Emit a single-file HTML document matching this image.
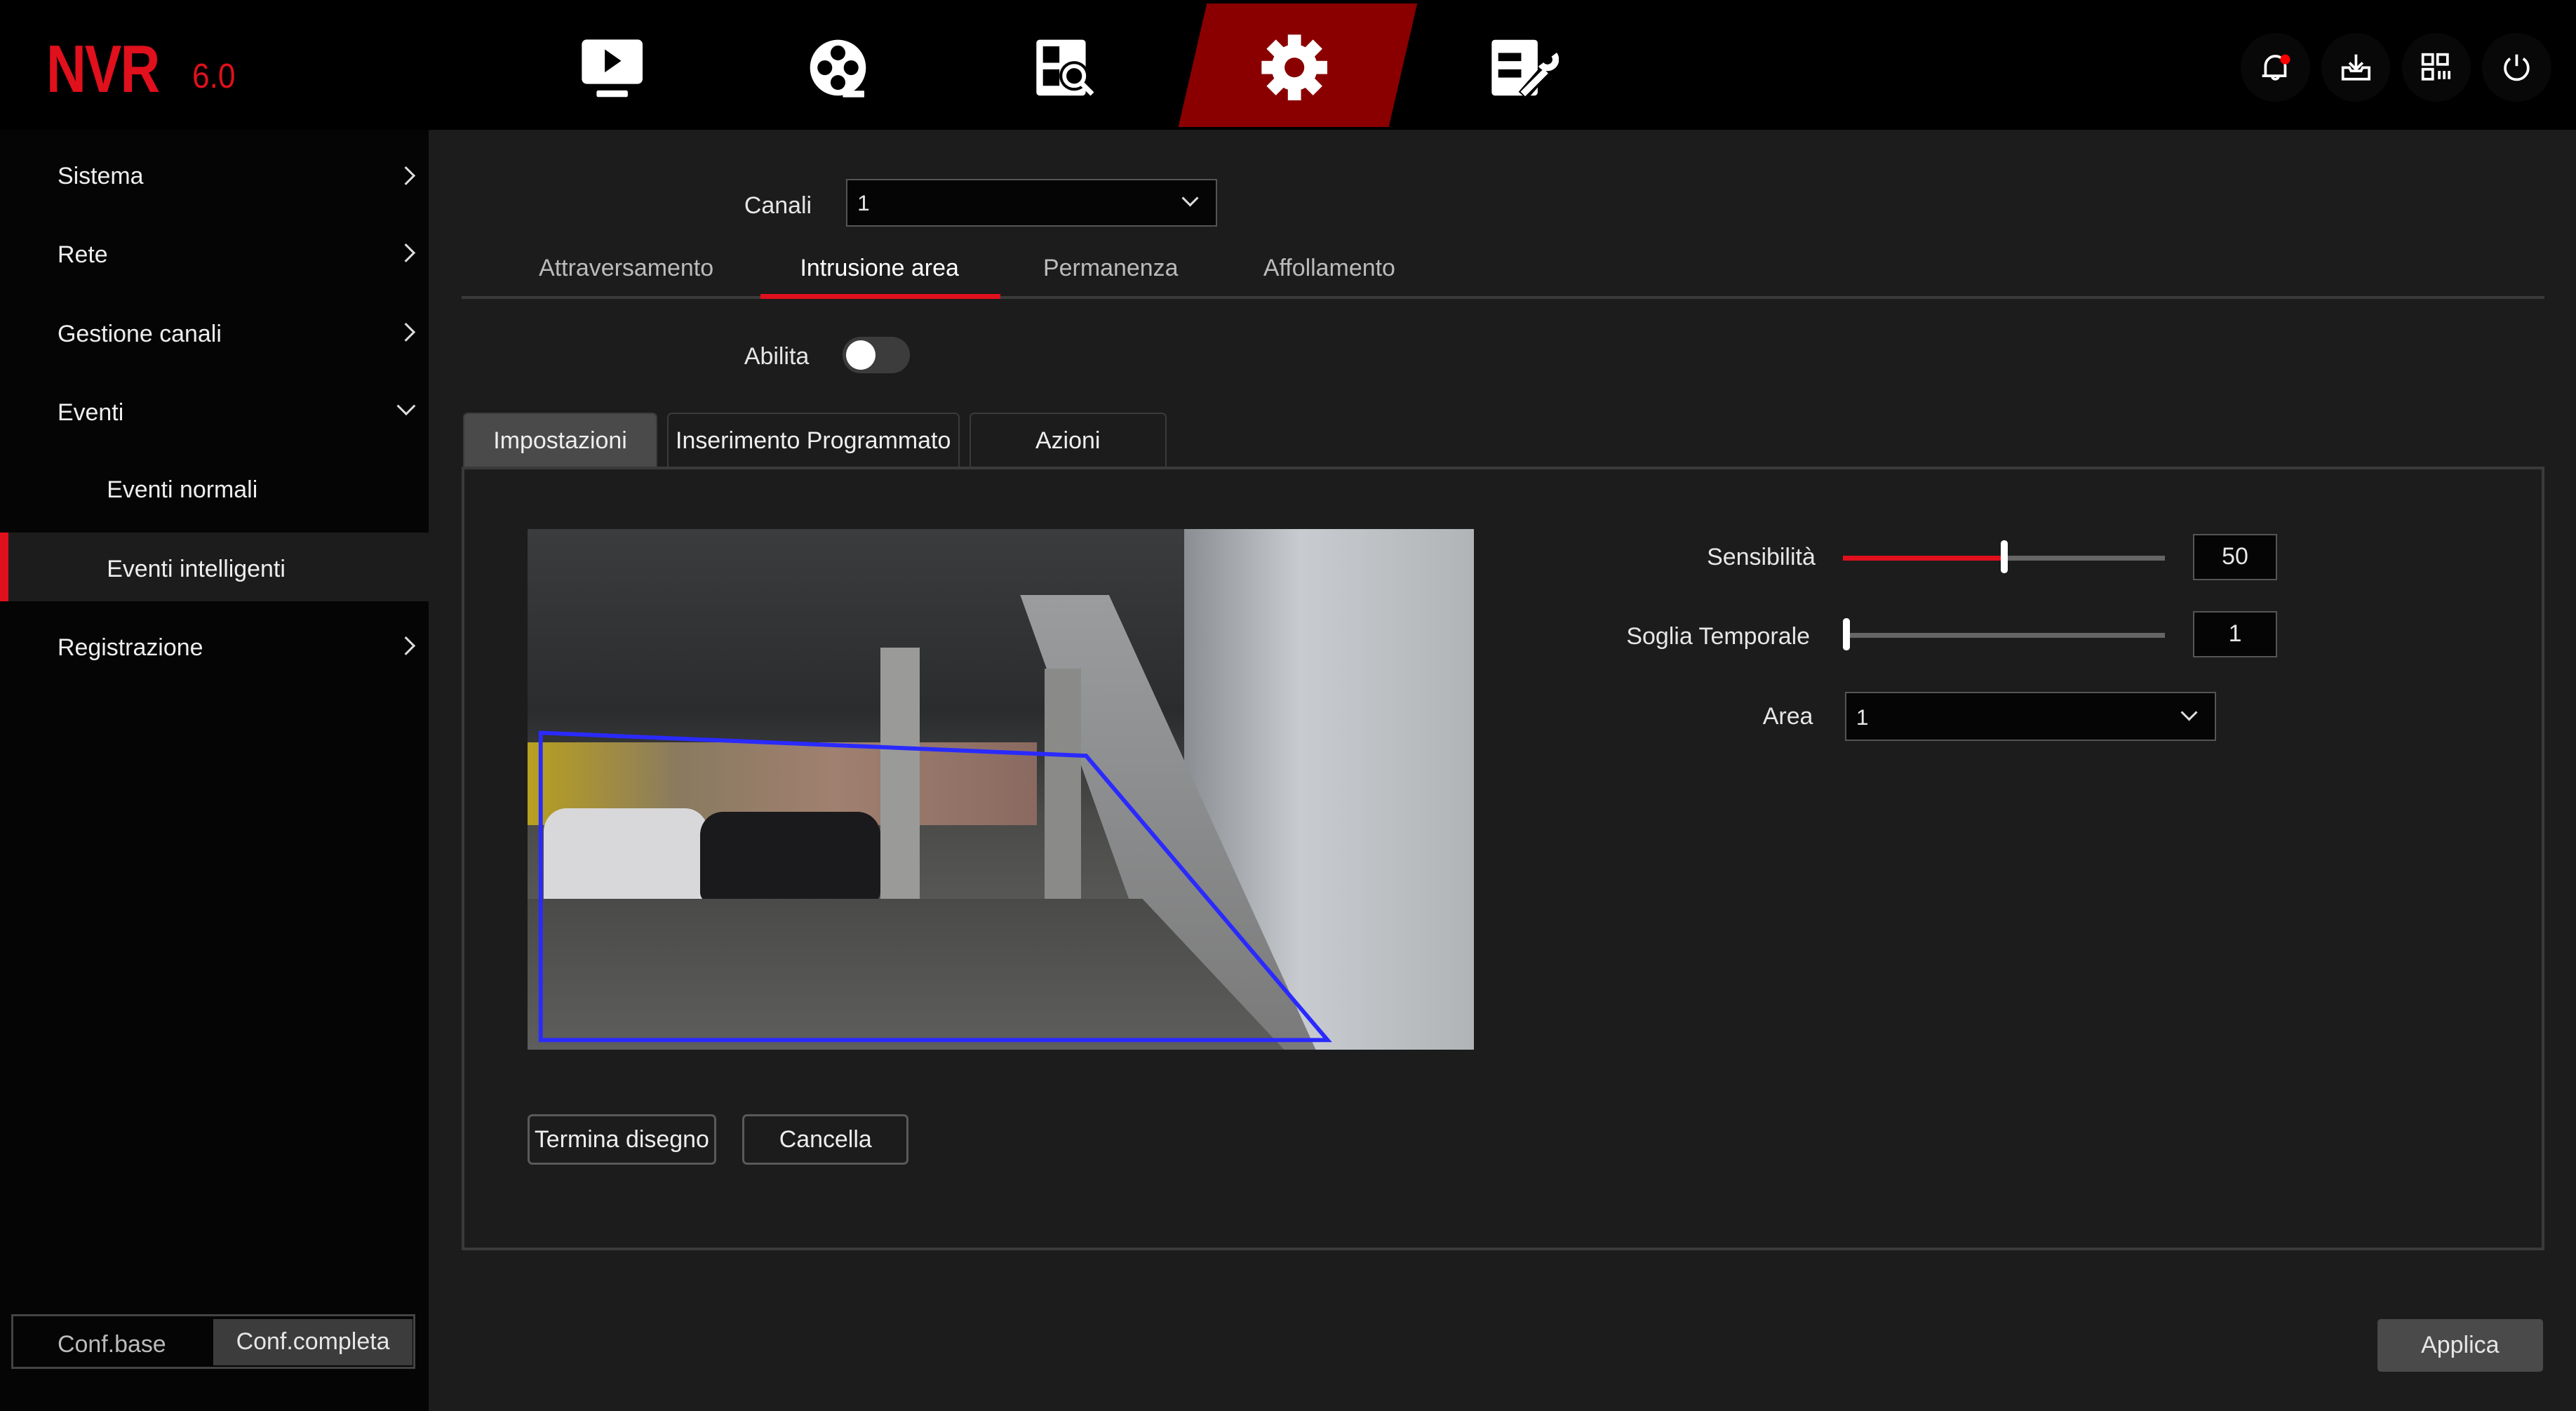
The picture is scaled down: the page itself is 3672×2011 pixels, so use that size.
<!DOCTYPE html>
<html><head><meta charset="utf-8"><style>
html,body{margin:0;padding:0;background:#1c1c1c;width:3672px;height:2011px;overflow:hidden}
#w{zoom:2.3418;width:1568px;height:859px;position:relative;font-family:"Liberation Sans",sans-serif;color:#e6e6e6;font-size:14.5px}
.a{position:absolute}
#hdr{left:0;top:0;width:1568px;height:79px;background:#000}
#side{left:0;top:79px;width:261px;height:780px;background:#050505}
.mi{position:absolute;left:35px;font-size:14.5px;color:#eee}
.chev{position:absolute;left:243px;width:7px;height:7px;border-right:1.6px solid #ddd;border-top:1.6px solid #ddd;transform:rotate(45deg)}
.tab{position:absolute;top:251px;height:33px;border:1px solid #3a3a3a;border-bottom:none;border-radius:3px 3px 0 0;text-align:center;line-height:33px;color:#eee;box-sizing:border-box}
.btn{position:absolute;border:1.5px solid #5a5a5a;border-radius:3px;text-align:center;box-sizing:border-box;color:#eee;background:#1c1c1c}
.ic{position:absolute;top:20px;width:42px;height:42px;border-radius:50%;background:#080808}
</style></head><body><div id="w">
<div class="a" id="hdr"></div>
<div class="a" style="left:28px;top:19px;color:#e0101c;font-size:41px;font-weight:bold;letter-spacing:-1px;transform:scaleX(0.82);transform-origin:left">NVR</div>
<div class="a" style="left:117px;top:34px;color:#e0101c;font-size:21px;transform:scaleX(0.9);transform-origin:left">6.0</div>
<div class="a" style="left:726px;top:2px;width:128px;height:75px;background:#8a0000;transform:skewX(-13deg)"></div>
<svg class="a" style="left:353px;top:23px" width="40" height="38" viewBox="0 0 40 38"><rect x="1" y="1" width="37" height="27" rx="3" fill="#fff"/><path d="M15 7 L25 14 L15 21Z" fill="#000"/><rect x="10" y="32" width="19" height="4" rx="1" fill="#fff"/></svg>
<svg class="a" style="left:491px;top:22px" width="40" height="40" viewBox="0 0 40 40"><circle cx="19" cy="19" r="17" fill="#fff"/><circle cx="19" cy="10" r="4.5" fill="#000"/><circle cx="11" cy="19" r="4.5" fill="#000"/><circle cx="27" cy="19" r="4.5" fill="#000"/><circle cx="19" cy="28" r="4.5" fill="#000"/><rect x="22" y="33" width="13" height="4" fill="#fff"/></svg>
<svg class="a" style="left:630px;top:22px" width="40" height="40" viewBox="0 0 40 40"><rect x="1" y="2" width="30" height="34" rx="2" fill="#fff"/><rect x="5" y="6" width="10" height="10" fill="#000"/><rect x="5" y="20" width="10" height="10" fill="#000"/><circle cx="24" cy="24" r="9" fill="#000"/><circle cx="24" cy="24" r="6" fill="none" stroke="#fff" stroke-width="2.5"/><path d="M28 28 L35 35" stroke="#fff" stroke-width="3"/></svg>
<svg class="a" style="left:767px;top:20px" width="42" height="42" viewBox="0 0 42 42"><g fill="#fff" transform="translate(21 21)"><circle r="14"/><g id="t"><rect x="-4" y="-20" width="8" height="8"/></g><use href="#t" transform="rotate(45)"/><use href="#t" transform="rotate(90)"/><use href="#t" transform="rotate(135)"/><use href="#t" transform="rotate(180)"/><use href="#t" transform="rotate(225)"/><use href="#t" transform="rotate(270)"/><use href="#t" transform="rotate(315)"/><circle r="6" fill="#8a0000"/></g></svg>
<svg class="a" style="left:907px;top:22px" width="42" height="40" viewBox="0 0 42 40"><rect x="1" y="2" width="28" height="34" rx="2" fill="#fff"/><rect x="5" y="10" width="14" height="5" fill="#000"/><rect x="5" y="20" width="14" height="5" fill="#000"/><path d="M20 36 L34 20 M32 16 l6 0 l2 -5" stroke="#000" stroke-width="7" fill="none"/><path d="M20 35 L34 21 M31 17 a5 5 0 0 0 8 -6" stroke="#fff" stroke-width="4" fill="none"/></svg>
<div class="ic" style="left:1364px"></div><div class="ic" style="left:1413px"></div><div class="ic" style="left:1462px"></div><div class="ic" style="left:1511px"></div>
<svg class="a" style="left:1375px;top:31px" width="20" height="20" viewBox="0 0 20 20"><path d="M4 15 V9 a6 6 0 0 1 12 0 V15 H2 M8 15 a2 2 0 0 0 4 0" stroke="#fff" stroke-width="1.6" fill="none"/><circle cx="16" cy="5" r="3" fill="#f00"/></svg>
<svg class="a" style="left:1424px;top:31px" width="20" height="20" viewBox="0 0 20 20"><path d="M10 2 V11 M6 7 L10 11 L14 7 M2 10 V17 H18 V10 H14 L13 12 H7 L6 10 Z" stroke="#fff" stroke-width="1.6" fill="none"/></svg>
<svg class="a" style="left:1473px;top:31px" width="20" height="20" viewBox="0 0 20 20"><g stroke="#fff" stroke-width="1.6" fill="none"><rect x="2" y="2" width="6" height="6"/><rect x="11" y="2" width="6" height="6"/><rect x="2" y="11" width="6" height="6"/><path d="M12 12 V17 M15 12 V17 M18 12 V17"/></g></svg>
<svg class="a" style="left:1522px;top:31px" width="20" height="20" viewBox="0 0 20 20"><path d="M6 4.5 a7 7 0 1 0 8 0 M10 2 V9" stroke="#fff" stroke-width="1.6" fill="none"/></svg>

<div class="a" id="side"></div>
<div class="mi" style="top:99px">Sistema</div><div class="chev" style="top:103px"></div>
<div class="mi" style="top:147px">Rete</div><div class="chev" style="top:150px"></div>
<div class="mi" style="top:195px">Gestione canali</div><div class="chev" style="top:198px"></div>
<div class="mi" style="top:243px">Eventi</div><div class="chev" style="top:243px;transform:rotate(135deg)"></div>
<div class="mi" style="left:65px;top:290px">Eventi normali</div>
<div class="a" style="left:0;top:324px;width:261px;height:42px;background:#1c1c1c"></div>
<div class="a" style="left:0;top:324px;width:5px;height:42px;background:#e0101c"></div>
<div class="mi" style="left:65px;top:338px">Eventi intelligenti</div>
<div class="mi" style="top:386px">Registrazione</div><div class="chev" style="top:389px"></div>
<div class="a" style="left:7px;top:800px;width:246px;height:33px;border:1.5px solid #444;box-sizing:border-box"></div>
<div class="a" style="left:35px;top:810px;color:#bbb">Conf.base</div>
<div class="a" style="left:130px;top:803px;width:121px;height:28px;background:#3c3c3c;text-align:center;line-height:28px">Conf.completa</div>

<div class="a" style="left:453px;top:117px">Canali</div>
<div class="a" style="left:515px;top:109px;width:226px;height:29px;border:1px solid #555;background:#050505;box-sizing:border-box"><span style="position:absolute;left:6px;top:6px;font-size:13.5px">1</span><div class="a" style="left:205px;top:7px;width:6px;height:6px;border-right:1.6px solid #ddd;border-bottom:1.6px solid #ddd;transform:rotate(45deg)"></div></div>
<div class="a" style="left:328px;top:155px;color:#bbb">Attraversamento</div>
<div class="a" style="left:487px;top:155px;color:#fff">Intrusione area</div>
<div class="a" style="left:635px;top:155px;color:#bbb">Permanenza</div>
<div class="a" style="left:769px;top:155px;color:#bbb">Affollamento</div>
<div class="a" style="left:281px;top:180px;width:1268px;height:2px;background:#3a3a3a"></div>
<div class="a" style="left:463px;top:179px;width:146px;height:3px;background:#e0101c"></div>
<div class="a" style="left:453px;top:209px">Abilita</div>
<div class="a" style="left:513px;top:205px;width:41px;height:22px;border-radius:11px;background:#3c3c3c"></div>
<div class="a" style="left:515px;top:207px;width:18px;height:18px;border-radius:50%;background:#fff"></div>
<div class="tab" style="left:282px;width:118px;background:#4a4a4a">Impostazioni</div>
<div class="tab" style="left:406px;width:178px">Inserimento Programmato</div>
<div class="tab" style="left:590px;width:120px">Azioni</div>
<div class="a" style="left:281px;top:284px;width:1268px;height:477px;border:2px solid #3a3a3a;box-sizing:border-box"></div>
<div class="a" style="left:321px;top:322px;width:576px;height:317px;overflow:hidden;background:linear-gradient(180deg,#3a3c3e 0%,#2a2c2e 35%,#4a4a48 55%,#5a5a58 75%,#6a6a68 100%)">
 <div class="a" style="left:400px;top:0;width:176px;height:317px;background:linear-gradient(90deg,#8a8e92,#c8ccd0 40%,#b0b4b6)"></div>
 <div class="a" style="left:300px;top:40px;width:180px;height:277px;background:linear-gradient(180deg,#9a9c9e,#7a7a7a);clip-path:polygon(0 0,30% 0,100% 100%,55% 100%)"></div>
 <div class="a" style="left:0;top:130px;width:310px;height:50px;background:linear-gradient(90deg,#b8a020,#8a7a60 30%,#a08070 60%,#8a6a60)"></div>
 <div class="a" style="left:10px;top:170px;width:100px;height:62px;border-radius:14px 14px 6px 6px;background:#d8d8da"></div>
 <div class="a" style="left:105px;top:172px;width:110px;height:55px;border-radius:14px 14px 6px 6px;background:#1a1a1c"></div>
 <div class="a" style="left:215px;top:72px;width:24px;height:245px;background:#9a9a98"></div>
 <div class="a" style="left:315px;top:85px;width:22px;height:200px;background:#8a8a88"></div>
 <div class="a" style="left:0;top:225px;width:576px;height:92px;background:linear-gradient(180deg,#4a4a48,#5e5e5c);clip-path:polygon(0 0,65% 0,80% 100%,0 100%)"></div>
 <svg class="a" style="left:0;top:0" width="576" height="317"><polygon points="8,124 340,138 487,311 8,311" fill="none" stroke="#2a2aff" stroke-width="2.5"/></svg>
</div>
<div class="btn" style="left:321px;top:678px;width:115px;height:31px;line-height:29px">Termina disegno</div>
<div class="btn" style="left:452px;top:678px;width:101px;height:31px;line-height:29px">Cancella</div>
<div class="a" style="left:1039px;top:331px">Sensibilità</div>
<div class="a" style="left:1122px;top:338px;width:196px;height:3px;background:#666"></div>
<div class="a" style="left:1122px;top:338px;width:98px;height:3px;background:#e0101c"></div>
<div class="a" style="left:1218px;top:329px;width:4px;height:20px;background:#fff;border-radius:2px"></div>
<div class="a" style="left:1335px;top:325px;width:51px;height:28px;border:1px solid #555;background:#050505;box-sizing:border-box;text-align:center;line-height:26px">50</div>
<div class="a" style="left:990px;top:379px">Soglia Temporale</div>
<div class="a" style="left:1122px;top:385px;width:196px;height:3px;background:#666"></div>
<div class="a" style="left:1122px;top:376px;width:4px;height:20px;background:#fff;border-radius:2px"></div>
<div class="a" style="left:1335px;top:372px;width:51px;height:28px;border:1px solid #555;background:#050505;box-sizing:border-box;text-align:center;line-height:26px">1</div>
<div class="a" style="left:1073px;top:428px">Area</div>
<div class="a" style="left:1123px;top:421px;width:226px;height:30px;border:1px solid #555;background:#050505;box-sizing:border-box"><span style="position:absolute;left:6px;top:7px;font-size:13.5px">1</span><div class="a" style="left:205px;top:8px;width:6px;height:6px;border-right:1.6px solid #ddd;border-bottom:1.6px solid #ddd;transform:rotate(45deg)"></div></div>
<div class="a" style="left:1447px;top:803px;width:101px;height:32px;background:#4a4a4a;border-radius:2px;text-align:center;line-height:32px">Applica</div>
</div></body></html>
